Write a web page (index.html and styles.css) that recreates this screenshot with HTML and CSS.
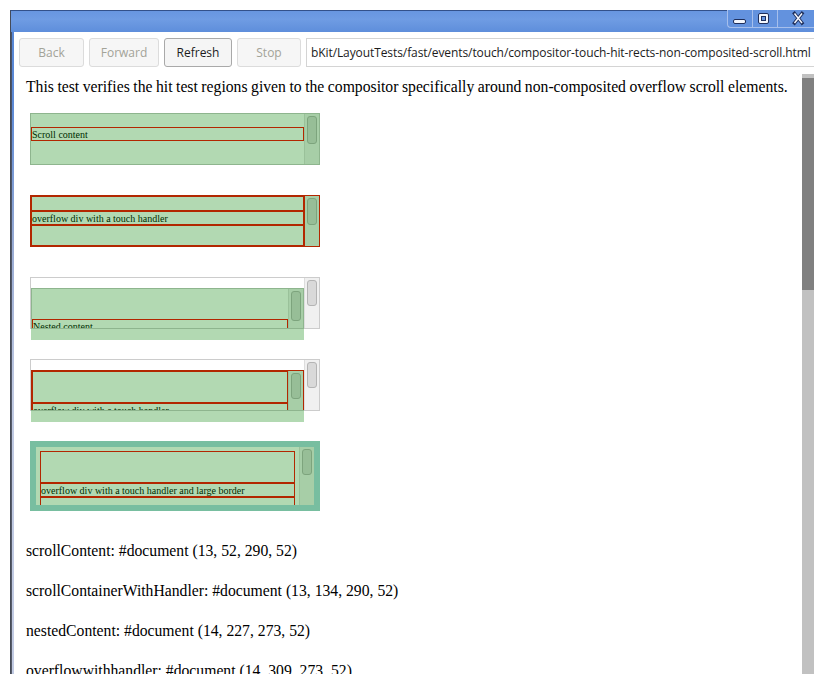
FILE: index.html
```html
<!DOCTYPE html>
<html>
<head>
<meta charset="utf-8">
<title>compositor-touch-hit-rects-non-composited-scroll</title>
<link rel="stylesheet" href="styles.css">
</head>
<body>
<div class="desktop">
  <div class="window">
    <div class="titlebar">
      <div class="wm">
        <div class="wm-btn">
          <svg width="24" height="17" viewBox="0 0 24 17"><rect x="5.5" y="9.5" width="12" height="4" rx="1.5" fill="#f4f7fd" stroke="#1f2f5c"/></svg>
        </div>
        <div class="wm-btn">
          <svg width="24" height="17" viewBox="0 0 24 17"><rect x="5.5" y="3.5" width="10" height="10" rx="1.5" fill="#f4f7fd" stroke="#1f2f5c"/><rect x="8.5" y="6.5" width="4" height="4" fill="#6594df" stroke="#1f2f5c"/></svg>
        </div>
        <div class="wm-btn close">
          <svg width="41" height="17" viewBox="0 0 41 17"><path d="M16.5 3.5 L24 13 M24 3.5 L16.5 13" stroke="#1f2f5c" stroke-width="3.4" stroke-linecap="square" fill="none"/><path d="M16.5 3.5 L24 13 M24 3.5 L16.5 13" stroke="#f4f7fd" stroke-width="1.5" fill="none"/></svg>
        </div>
      </div>
    </div>
    <div class="client">
      <div class="toolbar">
        <div class="tb-btn w-back">Back</div>
        <div class="tb-btn w-forward">Forward</div>
        <div class="tb-btn w-refresh active">Refresh</div>
        <div class="tb-btn w-stop">Stop</div>
        <div class="url">bKit/LayoutTests/fast/events/touch/compositor-touch-hit-rects-non-composited-scroll.html</div>
      </div>
      <div class="view">
        <div class="page">
          <p class="intro">This test verifies the hit test regions given to the compositor specifically around non-composited overflow scroll elements.</p>
          <div class="cases">
            <div class="case">
              <div class="box">
                <div class="sc">
                  <div class="rect text-rect mt13">Scroll content</div>
                </div>
                <div class="sbar"><div class="thumb h28"></div></div>
              </div>
              <div class="hit hit-full"></div>
            </div>

            <div class="case">
              <div class="box box-red">
                <div class="sc">
                  <div class="rect h15"></div>
                  <div class="rect text-rect">overflow div with a touch handler</div>
                  <div class="rect h21"></div>
                </div>
                <div class="sbar sbar-red"><div class="thumb h27"></div></div>
              </div>
              <div class="hit hit-full"></div>
            </div>

            <div class="case">
              <div class="box">
                <div class="sc pt10">
                  <div class="nested">
                    <div class="sc">
                      <div class="rect text-rect mt30">Nested content</div>
                    </div>
                    <div class="sbar"><div class="thumb h30"></div></div>
                  </div>
                </div>
                <div class="sbar"><div class="thumb h26"></div></div>
              </div>
              <div class="hit hit-nested"></div>
            </div>

            <div class="case">
              <div class="box">
                <div class="sc pt10">
                  <div class="nested nested-red">
                    <div class="sc">
                      <div class="rect h32"></div>
                      <div class="rect text-rect">overflow div with a touch handler</div>
                    </div>
                    <div class="sbar"><div class="thumb h26"></div></div>
                  </div>
                </div>
                <div class="sbar"><div class="thumb h26"></div></div>
              </div>
              <div class="hit hit-nested"></div>
            </div>

            <div class="case">
              <div class="box box-blue">
                <div class="sc pad4">
                  <div class="rect h32"></div>
                  <div class="rect text-rect">overflow div with a touch handler and large border</div>
                  <div class="rect h21"></div>
                </div>
                <div class="sbar"><div class="thumb h26"></div></div>
              </div>
              <div class="hit hit-full"></div>
            </div>
          </div>
          <div class="results">
            <p>scrollContent: #document (13, 52, 290, 52)</p>
            <p>scrollContainerWithHandler: #document (13, 134, 290, 52)</p>
            <p>nestedContent: #document (14, 227, 273, 52)</p>
            <p>overflowwithhandler: #document (14, 309, 273, 52)</p>
          </div>
        </div>
        <div class="vscroll"><div class="vthumb"></div></div>
      </div>
    </div>
  </div>
</div>
</body>
</html>
```

FILE: styles.css
```css
* { box-sizing: border-box; }

html, body {
  margin: 0;
  padding: 0;
  width: 814px;
  height: 674px;
  overflow: hidden;
  background: #ffffff;
}

.desktop {
  padding: 10px 0 0 10px;
}

.window {
  width: 810px;
  height: 700px;
  border-top: 1px solid #33518a;
  border-left: 1px solid #454b58;
  background:
    linear-gradient(to right, rgba(70, 74, 86, 0.85) 0, rgba(70, 74, 86, 0.85) 1px, transparent 1px),
    linear-gradient(to bottom, #5787d6 0, #5b89d6 90px, #9aacd4 240px, #bfc9e2 380px, #c2cbe3 100%);
  display: flex;
  flex-direction: column;
}

.titlebar {
  flex: none;
  height: 21px;
  background: linear-gradient(to bottom, #6896e0 0%, #6f9ce3 40%, #5e8edb 100%);
  display: flex;
  justify-content: flex-end;
  align-items: flex-start;
}

.wm {
  display: flex;
  margin-top: -1px;
  height: 18px;
  border-left: 1px solid #a6bfec;
  border-bottom: 1px solid #a6bfec;
  border-bottom-left-radius: 4px;
  background: #6392de;
}

.wm-btn {
  width: 25px;
  height: 17px;
  border-right: 1px solid #a6bfec;
}

.wm-btn svg { display: block; }

.wm-btn.close {
  width: 42px;
  border-right: none;
}

.client {
  flex: 1;
  margin: 0 3px 0 3px;
  background: #ffffff;
  display: flex;
  flex-direction: column;
  min-height: 0;
}

.toolbar {
  flex: none;
  height: 42px;
  padding: 6px 0 0 5px;
  display: flex;
  gap: 5px;
  align-items: flex-start;
  white-space: nowrap;
}

.tb-btn {
  flex: none;
  height: 29px;
  border: 1px solid #dcdcdc;
  border-radius: 3px;
  background: #f6f6f6;
  font-family: "Open Sans", "DejaVu Sans", sans-serif;
  font-size: 12px;
  color: #a3a398;
  display: flex;
  align-items: center;
  justify-content: center;
}

.tb-btn.active {
  border-color: #a9a9a9;
  color: #1c1c1c;
  background: #f5f5f5;
}

.w-back { width: 65px; }
.w-forward { width: 70px; }
.w-refresh { width: 68px; }
.w-stop { width: 64px; }

.url {
  flex: 1;
  min-width: 0;
  height: 29px;
  border: 1px solid #d4d4d4;
  background: #ffffff;
  padding-left: 4px;
  font-family: "Open Sans", "DejaVu Sans", sans-serif;
  font-size: 12px;
  letter-spacing: -0.09px;
  line-height: 27px;
  color: #1c1c1c;
  overflow: hidden;
}

.view {
  flex: 1;
  min-height: 0;
  display: flex;
  overflow: hidden;
}

.page {
  width: 788px;
  flex: none;
  padding: 4px 0 0 12px;
  font-family: "Liberation Serif", "Times New Roman", serif;
  font-size: 15.7px;
  color: #000000;
  overflow: hidden;
}

.vscroll {
  width: 15px;
  flex: none;
  background: #c1c1c1;
  padding-top: 4px;
}

.vthumb {
  height: 212px;
  background: #808080;
}

.intro {
  margin: 0 0 17px 0;
  line-height: 18px;
  word-spacing: -0.4px;
  white-space: nowrap;
}

.cases {
  margin-left: 4px;
}

.case {
  position: relative;
  width: 290px;
  margin-bottom: 30px;
}

.box {
  width: 290px;
  height: 52px;
  border: 1px solid #cccccc;
  background: #ffffff;
  display: flex;
  overflow: hidden;
}

.box-red { border-color: #ff0000; }

.box-blue {
  height: 70px;
  border: 6px solid #add8e6;
}

.sc {
  flex: 1;
  min-width: 0;
  overflow: hidden;
  font-size: 10px;
  line-height: 12px;
  white-space: nowrap;
}

.pt10 { padding-top: 10px; }
.pad4 { padding: 4px 4px 0 4px; }

.sbar {
  flex: none;
  width: 15px;
  border-left: 1px solid #dddddd;
  background: #f0f0f0;
  padding: 2px 0 0 2px;
}

.sbar-red { border-left-color: #ff0000; }

.thumb {
  width: 10px;
  border: 1px solid #b4b4b4;
  border-radius: 3px;
  background: #d9d9d9;
}

.h26 { height: 26px; }
.h27 { height: 27px; }
.h28 { height: 28px; }
.h30 { height: 30px; }

.rect {
  border: 1px solid #ff0000;
  flex: none;
}

.text-rect {
  height: 14px;
  padding-top: 1px;
  overflow: hidden;
}
.h15 { height: 15px; }
.h21 { height: 21px; }
.h32 { height: 32px; }
.mt13 { margin-top: 13px; }
.mt30 { margin-top: 30px; }

.nested {
  height: 52px;
  border: 1px solid #cccccc;
  display: flex;
  overflow: hidden;
}

.nested-red { border-color: #ff0000; }

.hit {
  position: absolute;
  background: rgba(0, 128, 0, 0.3);
  pointer-events: none;
}

.hit-full {
  left: 0;
  top: 0;
  right: 0;
  bottom: 0;
}

.hit-nested {
  left: 1px;
  top: 11px;
  width: 273px;
  height: 52px;
}

.results p {
  margin: 0 0 20px 0;
  line-height: 20px;
  white-space: nowrap;
}
```
